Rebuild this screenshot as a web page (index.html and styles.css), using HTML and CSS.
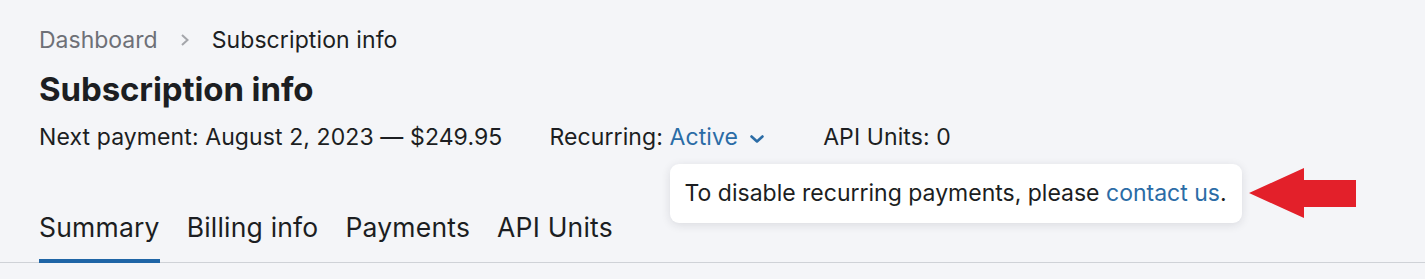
FILE: index.html
```html
<!DOCTYPE html>
<html lang="en">

<head>
  <meta charset="UTF-8" />
  <title>Subscription info</title>
  <meta name="viewport" content="width=device-width, initial-scale=1.0" />
  <link rel="stylesheet" href="styles.css">
</head>

<body>

  <header class="page-head">
    <nav class="crumbs">
      <a class="crumb" href="#">Dashboard</a>
      <svg class="crumb-sep" width="12" height="14" viewBox="0 0 12 14" aria-hidden="true">
        <path d="M3 2 L8.5 7 L3 12" fill="none" stroke="currentColor" stroke-width="2" />
      </svg>
      <span class="crumb current">Subscription info</span>
    </nav>

    <h1>Subscription info</h1>

    <div class="meta">
      <span class="meta-item">Next payment: August 2, 2023 — $249.95</span>
      <span class="meta-item">Recurring:
        <span class="dropdown">
          <a class="link" href="#">Active</a>
          <svg class="caret" width="16" height="10" viewBox="0 0 16 10" aria-hidden="true">
            <path d="M2.5 2.5 L8 7.5 L13.5 2.5" fill="none" stroke="currentColor" stroke-width="2.6" stroke-linecap="round" stroke-linejoin="round" />
          </svg>
          <span class="tooltip">
            To disable recurring payments, please <a class="link" href="#">contact us</a>.
            <!-- annotation arrow -->
            <svg class="pointer" width="108" height="51" viewBox="0 0 108 51" aria-hidden="true">
              <path d="M0 25 L55 0 L55 12 L107 12 L107 39 L55 39 L55 50 Z" fill="#e3202a" />
            </svg>
          </span>
        </span>
      </span>
      <span class="meta-item">API Units: 0</span>
    </div>
  </header>

  <nav class="tabs">
    <a class="tab active" href="#">Summary</a>
    <a class="tab" href="#">Billing info</a>
    <a class="tab" href="#">Payments</a>
    <a class="tab" href="#">API Units</a>
  </nav>

</body>

</html>
```

FILE: styles.css
```css
/* ─── BASE ───────────────────────────────────────────────────────── */
* {
  box-sizing: border-box;
  margin: 0;
  padding: 0;
}

html,
body {
  height: 100%;
  background: #f4f5f8;
  color: #1c1e22;
  font-family: Inter, "Noto Sans", sans-serif;
  overflow: hidden;
}

a {
  text-decoration: none;
  color: inherit;
}

.link {
  color: #2b6ca6;
}

/* ─── HEADER ─────────────────────────────────────────────────────── */
.page-head {
  padding: 25px 39px 0;
}

.crumbs {
  display: flex;
  align-items: center;
  gap: 21px;
  font-size: 23px;
  height: 30px;
}

.crumb {
  color: #6e7077;
}

.crumb.current {
  color: #1c1e22;
  letter-spacing: 0.1px;
}

.crumb-sep {
  color: #a4a6ab;
}

h1 {
  margin-top: 14px;
  font-size: 33px;
  font-weight: 700;
  line-height: 40px;
  letter-spacing: -0.1px;
}

/* ─── META ROW ───────────────────────────────────────────────────── */
.meta {
  display: flex;
  align-items: center;
  gap: 47px;
  margin-top: 13px;
  font-size: 23px;
  line-height: 30px;
  letter-spacing: 0.1px;
}

.dropdown {
  position: relative;
  display: inline-flex;
  align-items: center;
  gap: 11px;
  margin-right: 11px;
}

.caret {
  color: #2b6ca6;
  margin-top: 3px;
}

.tooltip {
  position: absolute;
  top: 42px;
  left: 0;
  white-space: nowrap;
  background: #fff;
  border-radius: 9px;
  padding: 14px 15px;
  box-shadow: 0 2px 10px rgba(30, 35, 50, 0.12);
  font-size: 23px;
  line-height: 31px;
  letter-spacing: 0;
}

.pointer {
  position: absolute;
  left: calc(100% + 7px);
  top: 4px;
}

/* ─── TABS ───────────────────────────────────────────────────────── */
.tabs {
  display: flex;
  gap: 27px;
  margin-top: 59px;
  padding: 0 39px;
  border-bottom: 1px solid #cfd2d7;
}

.tab {
  font-size: 26.5px;
  line-height: 32px;
  padding-bottom: 16px;
  border-bottom: 4px solid transparent;
  margin-bottom: -1px;
  letter-spacing: 0.2px;
}

.tab.active {
  border-bottom-color: #1f65a6;
}
```
